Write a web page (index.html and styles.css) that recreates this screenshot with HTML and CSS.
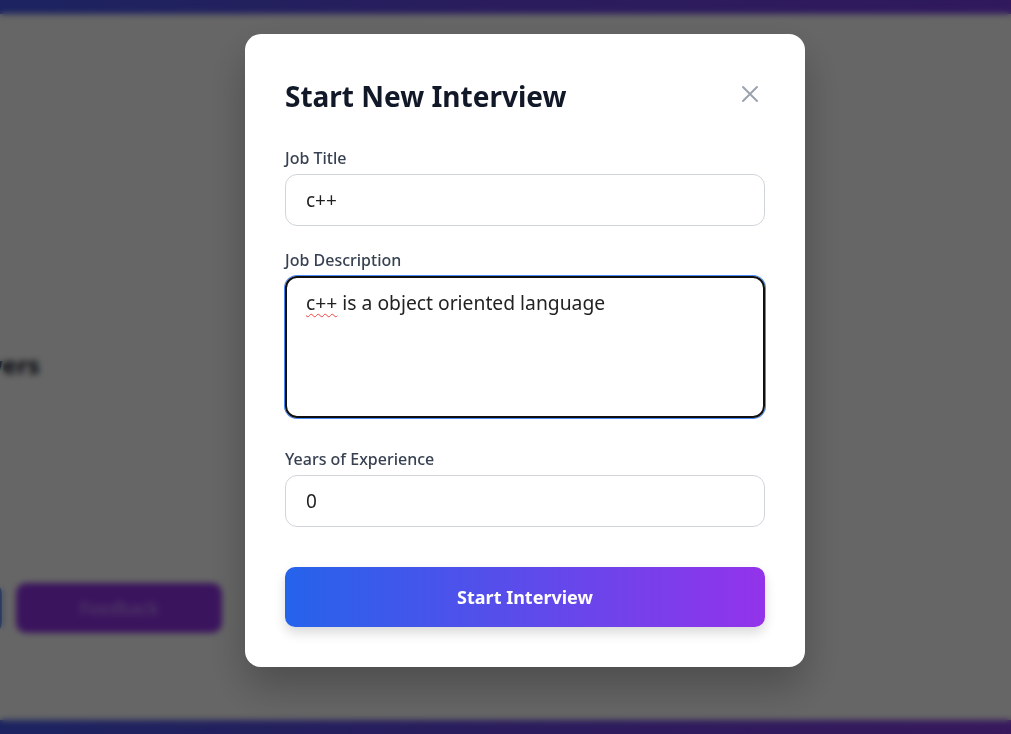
FILE: index.html
```html
<!DOCTYPE html>
<html lang="en">
<head>
<meta charset="utf-8">
<title>Start New Interview</title>
<link rel="stylesheet" href="styles.css">
</head>
<body>
<div class="page">
  <div class="topbar"></div>
  <main class="main">
    <div class="bg-col">
      <div class="bg-heading">Answers</div>
      <div class="bg-small">1</div>
      <div class="bg-actions">
        <div class="bg-btn bg-btn-blue"></div>
        <div class="bg-btn bg-btn-purple">Feedback</div>
      </div>
    </div>
  </main>
  <div class="bottombar"></div>
</div>

<div class="overlay">
  <div class="modal">
    <div class="modal-head">
      <h2 class="modal-title">Start New Interview</h2>
      <button class="close" aria-label="Close">
        <svg width="24" height="24" viewBox="0 0 24 24" fill="none" stroke="currentColor" stroke-width="2" stroke-linecap="round"><path d="M5 5l14 14M19 5L5 19"/></svg>
      </button>
    </div>
    <div class="field">
      <label class="label">Job Title</label>
      <div class="input">c++</div>
    </div>
    <div class="field field-ta">
      <label class="label">Job Description</label>
      <div class="textarea"><span class="spell">c++</span> is a object oriented language</div>
    </div>
    <div class="field">
      <label class="label">Years of Experience</label>
      <div class="input">0</div>
    </div>
    <button class="submit">Start Interview</button>
  </div>
</div>
</body>
</html>
```
FILE: styles.css
```css
* { box-sizing: border-box; }
html, body { margin: 0; height: 100%; }
body {
  font-family: "Noto Sans", "Open Sans", sans-serif;
  background: #ffffff;
  overflow: hidden;
}
.page {
  height: 734px;
  display: flex;
  flex-direction: column;
}
.topbar {
  height: 14px;
  background: linear-gradient(90deg, #465aef, #6a48e8, #7a3fe8);
  flex: none;
}
.main { flex: 1; display: flex; }
.bg-col {
  margin-left: -62px;
  padding-top: 334px;
  width: 300px;
  display: flex;
  flex-direction: column;
}
.bg-heading { font-size: 24px; font-weight: 700; color: #111827; }
.bg-small { margin-top: 158px; color: #6b7280; font-size: 14px; }
.bg-actions { display: flex; gap: 14px; margin-top: 25px; }
.bg-btn { height: 50px; border-radius: 10px; }
.bg-btn-blue { width: 64px; background: #2563eb; }
.bg-btn-purple { width: 206px; background: #9333ea; color: #c084fc; font-weight: 600; display: flex; align-items: center; justify-content: center; font-size: 17px; }
.bottombar {
  height: 14px;
  flex: none;
  background: linear-gradient(90deg, #465aef, #6a48e8, #8a3fe8);
}

.overlay {
  position: fixed;
  inset: 0;
  background: rgba(0, 0, 0, 0.6);
  backdrop-filter: blur(3px);
  display: flex;
  align-items: flex-start;
  padding: 34px 0 0 245px;
}
.modal {
  width: 560px;
  background: #fff;
  border-radius: 16px;
  padding: 40px;
  box-shadow: 0 20px 40px rgba(0,0,0,0.25);
}
.modal-head {
  display: flex;
  align-items: center;
  justify-content: space-between;
  height: 44px;
  margin-bottom: 30px;
}
.modal-title {
  margin: 0;
  font-size: 28px;
  font-weight: 700;
  color: #111827;
}
.close {
  border: 0;
  background: none;
  padding: 0;
  margin-right: 3px;
  margin-bottom: 4px;
  color: #9ca3af;
  display: flex;
  cursor: pointer;
}
.field { margin-bottom: 24px; }
.field-ta { margin-bottom: 31px; }
.label {
  display: block;
  font-size: 16px;
  line-height: 20px;
  font-weight: 500;
  color: #374151;
  margin-bottom: 6px;
}
.input {
  height: 52px;
  border: 1px solid #d1d5db;
  border-radius: 12px;
  padding: 0 20px;
  display: flex;
  align-items: center;
  font-size: 19px;
  color: #1f1f1f;
}
.textarea {
  height: 142px;
  border: 2px solid #101010;
  border-radius: 12px;
  box-shadow: 0 0 0 1px #4a8af4;
  padding: 11px 19px;
  font-size: 19.3px;
  line-height: 28px;
  color: #222222;
}
.spell {
  text-decoration: underline wavy #ef4444;
  text-decoration-thickness: 1px;
  text-underline-offset: 3px;
}
.submit {
  margin-top: 16px;
  width: 100%;
  height: 60px;
  border: 0;
  border-radius: 10px;
  background: linear-gradient(90deg, #2563eb, #9333ea);
  color: #fff;
  font-family: inherit;
  font-size: 18px;
  font-weight: 700;
  box-shadow: 0 6px 12px rgba(0,0,0,0.15);
  cursor: pointer;
}
```
